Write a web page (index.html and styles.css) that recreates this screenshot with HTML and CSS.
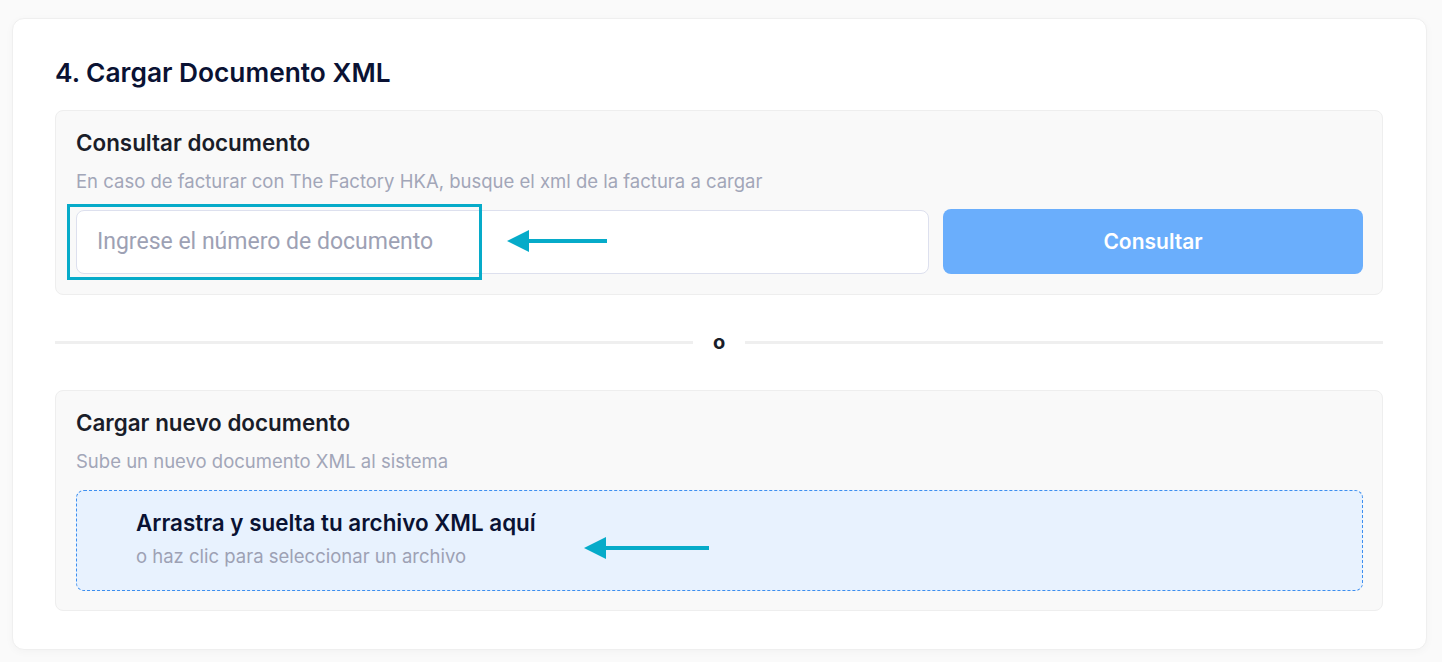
FILE: index.html
```html
<!DOCTYPE html>
<html lang="es">

<head>
    <meta charset="UTF-8" />
    <meta name="viewport" content="width=device-width, initial-scale=1.0" />
    <title>Cargar Documento XML</title>
    <link rel="stylesheet" href="styles.css">
</head>

<body>
    <div class="card">
        <h2 class="card-title">4. Cargar Documento XML</h2>

        <div class="section">
            <h3 class="section-title">Consultar documento</h3>
            <p class="section-desc">En caso de facturar con The Factory HKA, busque el xml de la factura a cargar</p>
            <div class="query-row">
                <div class="input-wrap">
                    <input class="doc-input" type="text" placeholder="Ingrese el número de documento" />
                    <span class="mark-box"></span>
                    <span class="arrow arrow-input"></span>
                </div>
                <button class="btn-query">Consultar</button>
            </div>
        </div>

        <div class="divider">
            <span class="divider-line"></span>
            <span class="divider-text">o</span>
            <span class="divider-line"></span>
        </div>

        <div class="section">
            <h3 class="section-title">Cargar nuevo documento</h3>
            <p class="section-desc">Sube un nuevo documento XML al sistema</p>
            <div class="dropzone">
                <p class="drop-title">Arrastra y suelta tu archivo XML aquí</p>
                <p class="drop-sub">o haz clic para seleccionar un archivo</p>
                <span class="arrow arrow-drop"></span>
            </div>
        </div>
    </div>
</body>

</html>
```

FILE: styles.css
```css
* {
    box-sizing: border-box;
}

body {
    margin: 0;
    padding: 18px 15px 12px 12px;
    background: #fafafa;
    font-family: Inter, "Noto Sans", sans-serif;
}

.card {
    background: #fff;
    border: 1px solid #efefef;
    border-radius: 12px;
    box-shadow: 0 2px 8px rgba(0, 0, 0, 0.03);
    padding: 39px 43px 38px 42px;
}

.card-title {
    margin: 0 0 22px 0;
    font-size: 26.3px;
    line-height: 30px;
    font-weight: 600;
    color: #0a1233;
}

.section {
    background: #f9f9f9;
    border: 1px solid #eeeeee;
    border-radius: 8px;
    padding: 18px 19px 20px 20px;
}

.section + .divider + .section {
    padding-bottom: 19px;
}

.section-title {
    margin: 0;
    font-size: 22.4px;
    line-height: 28px;
    font-weight: 600;
    color: #1a1d29;
}

.section-desc {
    margin: 12px 0 0 0;
    font-size: 18.5px;
    line-height: 24px;
    color: #a2a6b8;
}

.query-row {
    display: flex;
    align-items: center;
    gap: 14px;
    margin-top: 16px;
}

.input-wrap {
    flex: 1;
    position: relative;
}

.doc-input {
    display: block;
    width: 100%;
    height: 64px;
    border: 1px solid #dde0ee;
    border-radius: 8px;
    background: #fff;
    padding: 0 20px;
    font-family: Roboto, "Liberation Sans", sans-serif;
    font-size: 23px;
    color: #333;
    outline: none;
}

.doc-input::placeholder {
    color: #9da1b4;
}

.btn-query {
    width: 420px;
    height: 65px;
    border: none;
    border-radius: 8px;
    background: #6aaefc;
    color: #fff;
    font-family: Inter, "Noto Sans", sans-serif;
    font-size: 21px;
    font-weight: 600;
    cursor: pointer;
}

/* anotaciones */
.mark-box {
    position: absolute;
    left: -9px;
    top: -6px;
    width: 415px;
    height: 76px;
    border: 3px solid #06abc9;
    pointer-events: none;
}

.arrow {
    position: absolute;
    height: 4px;
    background: #06abc9;
}

.arrow::before {
    content: "";
    position: absolute;
    left: -20px;
    top: -9px;
    border-top: 11px solid transparent;
    border-bottom: 11px solid transparent;
    border-right: 22px solid #06abc9;
}

.arrow-input {
    left: 451px;
    top: 29px;
    width: 80px;
}

.arrow-drop {
    left: 527px;
    top: 55px;
    width: 105px;
}

.divider {
    display: flex;
    align-items: center;
    gap: 20px;
    margin: 33px 0 34px 0;
}

.divider-line {
    flex: 1;
    height: 3px;
    background: #efefef;
}

.divider-text {
    font-size: 20px;
    line-height: 28px;
    font-weight: 700;
    color: #1a1d29;
}

.dropzone {
    position: relative;
    margin-top: 17px;
    background: #e8f2fe;
    border: 1px dashed #3d8ff0;
    border-radius: 8px;
    padding: 18px 20px 21px 59px;
    cursor: pointer;
}

.drop-title {
    margin: 0;
    font-size: 22.4px;
    line-height: 28px;
    font-weight: 600;
    color: #0a1233;
}

.drop-sub {
    margin: 6px 0 0 0;
    font-size: 18.5px;
    line-height: 26px;
    color: #9da1b4;
}
```
